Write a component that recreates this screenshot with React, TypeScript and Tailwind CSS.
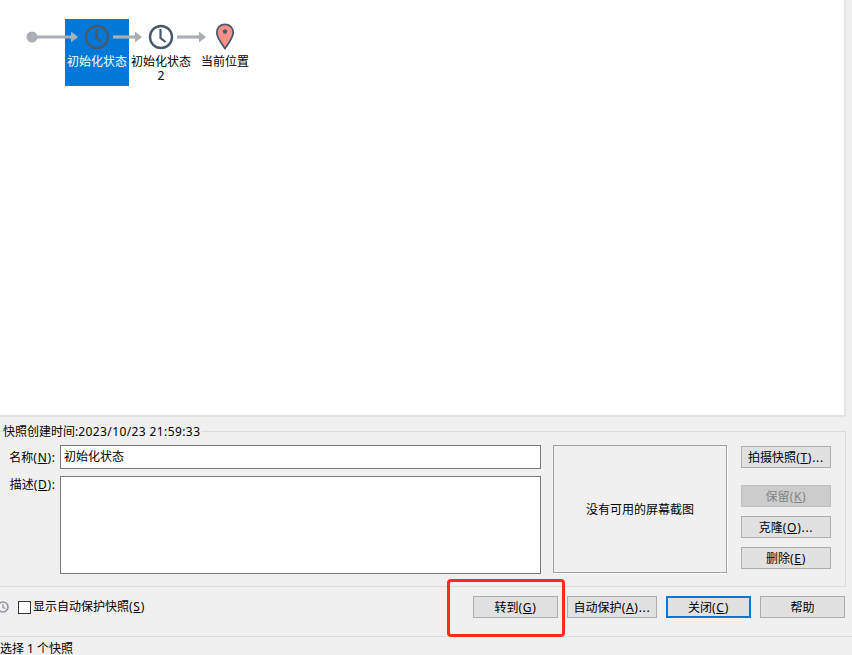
const cjk = "font-['Noto_Sans','Noto_Sans_CJK_SC',sans-serif]";

function Mnemonic({ text, k, tail = "" }: { text: string; k: string; tail?: string }) {
  return (
    <>
      {text}<span className="tracking-[0.7px]">(<span className="underline underline-offset-1">{k}</span>){tail}</span>
    </>
  );
}

function Btn({
  children,
  className = "",
  variant = "normal",
}: {
  children: React.ReactNode;
  className?: string;
  variant?: "normal" | "disabled" | "focus";
}) {
  const look =
    variant === "disabled"
      ? "border bg-[#cccccc] border-[#bfbfbf] text-[#838383]"
      : variant === "focus"
        ? "border-2 bg-[#e1e1e1] border-[#0078d7] text-black"
        : "border bg-[#e1e1e1] border-[#adadad] text-black";
  return (
    <button className={`flex items-center justify-center h-[22px] pt-[1px] text-[12px] leading-none ${look} ${className}`}>
      {children}
    </button>
  );
}

function Diagram() {
  const hand = "#47596a";
  return (
    <svg width="260" height="60" viewBox="0 0 260 60" className="absolute left-0 top-0" fill="none">
      <circle cx="32" cy="37" r="5.5" fill="#a9afb5" />
      <path d="M32 37H72" stroke="#a9afb5" strokeWidth="3.2" />
      <path d="M71 31.5L78 37L71 42.5Z" fill="#a9afb5" />
      <circle cx="97" cy="37" r="11" stroke={hand} strokeWidth="2.4" />
      <path d="M96.5 29V38L101.5 42" stroke={hand} strokeWidth="2.2" />
      <path d="M113 37H136" stroke="#a9afb5" strokeWidth="3.2" />
      <path d="M135 31.5L142 37L135 42.5Z" fill="#a9afb5" />
      <circle cx="161" cy="37" r="11" stroke={hand} strokeWidth="2.4" />
      <path d="M160.5 29V38L165.5 42" stroke={hand} strokeWidth="2.2" />
      <path d="M177 37H200" stroke="#a9afb5" strokeWidth="3.2" />
      <path d="M199 31.5L206 37L199 42.5Z" fill="#a9afb5" />
      <path
        d="M225 48.5C221 42.5 216.8 37.5 216.8 32.5C216.8 27.5 220.5 24.3 225 24.3C229.5 24.3 233.2 27.5 233.2 32.5C233.2 37.5 229 42.5 225 48.5Z"
        fill="#fc9088"
        stroke={hand}
        strokeWidth="1.8"
      />
      <circle cx="225" cy="31.5" r="2.2" fill={hand} />
    </svg>
  );
}

function NodeLabel({ x, selected = false, children }: { x: number; selected?: boolean; children: React.ReactNode }) {
  return (
    <div
      className={`absolute top-[55px] w-[64px] text-center text-[12px] leading-[14px] ${selected ? "text-white" : "text-black"}`}
      style={{ left: x }}
    >
      {children}
    </div>
  );
}

export default function App() {
  return (
    <div className={`relative w-[852px] h-[655px] overflow-hidden bg-[#f0f0f0] text-black text-[12px] ${cjk}`}>
      <div className="relative w-[846px] h-[417px] bg-white border-r-2 border-b-2 border-[#e3e3e3]">
        <div className="absolute left-[65px] top-[19px] w-[64px] h-[67px] bg-[#0078d7]" />
        <Diagram />
        <NodeLabel x={65} selected>初始化状态</NodeLabel>
        <NodeLabel x={129}>初始化状态<br />2</NodeLabel>
        <NodeLabel x={193}>当前位置</NodeLabel>
      </div>

      <div className="relative mt-[14px] w-[846px] h-[156px] border-t border-r border-b border-[#dcdcdc] flex pt-[13px]">
        <div className="absolute left-[3px] top-[-7px] pr-[1px] bg-[#f0f0f0] leading-[14px] text-[12px]">
          快照创建时间:<span className="tracking-[0.4px]">2023/10/23 21:59:33</span>
        </div>
        <div className="w-[60px] flex flex-col shrink-0">
          <div className="h-[24px] pr-[5px] text-right leading-[25px]"><Mnemonic text="名称" k="N" />:</div>
          <div className="mt-[8px] pr-[5px] text-right leading-[16px]"><Mnemonic text="描述" k="D" />:</div>
        </div>
        <div className="w-[481px] flex flex-col shrink-0 gap-[7px]">
          <div className="h-[24px] bg-white border border-[#7a7a7a] pl-[3px] leading-[21px]">初始化状态</div>
          <div className="h-[98px] bg-white border border-[#7a7a7a]" />
        </div>
        <div className="ml-[12px] w-[174px] h-[128px] pt-[2px] shrink-0 flex items-center justify-center border border-[#a0a0a0] shadow-[1px_1px_0_#ffffff]">
          没有可用的屏幕截图
        </div>
        <div className="ml-[14px] w-[90px] flex flex-col pt-[1px]">
          <Btn><Mnemonic text="拍摄快照" k="T" tail="..." /></Btn>
          <Btn variant="disabled" className="mt-[17px]"><Mnemonic text="保留" k="K" /></Btn>
          <Btn className="mt-[9px]"><Mnemonic text="克隆" k="O" tail="..." /></Btn>
          <Btn className="mt-[9px]"><Mnemonic text="删除" k="E" /></Btn>
        </div>
      </div>

      <div className="w-[846px] h-[49px] flex items-start pt-[9px] pr-[1px]">
        <div className="relative w-[18px] h-[22px] shrink-0">
          <svg width="12" height="12" viewBox="0 0 12 12" fill="none" className="absolute left-[-3px] top-[5px]">
            <circle cx="6" cy="6" r="5" stroke="#8f979e" strokeWidth="1.6" />
            <path d="M6 3V6.5L8.5 7.5" stroke="#8f979e" strokeWidth="1.3" />
          </svg>
        </div>
        <div className="flex items-center h-[22px] shrink-0">
          <span className="w-[13px] h-[13px] bg-white border border-[#333333] block" />
          <span className="ml-[2px]"><Mnemonic text="显示自动保护快照" k="S" /></span>
        </div>
        <div className="ml-auto flex gap-[9px]">
          <Btn className="w-[85px]"><Mnemonic text="转到" k="G" /></Btn>
          <Btn className="w-[90px]"><Mnemonic text="自动保护" k="A" tail="..." /></Btn>
          <Btn variant="focus" className="w-[85px]"><Mnemonic text="关闭" k="C" /></Btn>
          <Btn className="w-[85px]">帮助</Btn>
        </div>
      </div>

      <div className="border-t border-[#dcdcdc] h-[19px] pt-[5px] leading-[14px]">选择 1 个快照</div>

      <div className="absolute left-[447px] top-[579px] w-[118px] h-[58px] border-[3px] border-[#ff2a1f] rounded-[4px]" />
    </div>
  );
}
